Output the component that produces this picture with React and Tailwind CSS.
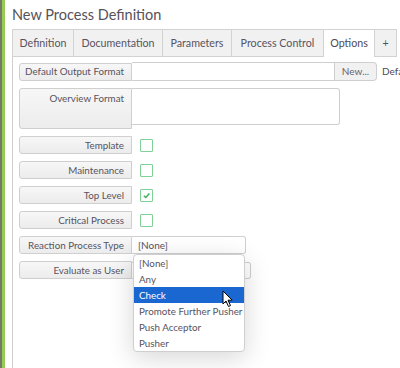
import React from 'react';

const font = { fontFamily: 'Lato, "Open Sans", sans-serif' };

function Label({ children, tall }) {
  return (
    <div
      className={`w-[113px] shrink-0 flex justify-end pr-[7px] whitespace-nowrap rounded-l-[3px] border border-[#cfcfcf] bg-gradient-to-b from-[#f7f7f7] to-[#ececec] text-[9.8px] text-[#57535f] ${tall ? 'h-[41px] items-start pt-[2px]' : 'h-[18px] items-center'}`}
    >
      {children}
    </div>
  );
}

function Check({ checked }) {
  return (
    <div className="ml-[8px] w-[13px] h-[13px] border border-[#7fd197] rounded-[1px] bg-white flex items-center justify-center">
      {checked && (
        <svg width="9" height="9" viewBox="0 0 10 10">
          <path d="M2 5.2 L4.2 7.3 L8.2 2.8" fill="none" stroke="#3fae5a" strokeWidth="1.6" />
        </svg>
      )}
    </div>
  );
}

export default function App() {
  const tabs = [
    { t: 'Definition', w: 'w-[62px]' },
    { t: 'Documentation', w: 'w-[89px]' },
    { t: 'Parameters', w: 'w-[69px]' },
    { t: 'Process Control', w: 'w-[92px]' },
    { t: 'Options', w: 'w-[51px]', active: true },
    { t: '+', w: 'w-[22px]' },
  ];
  const checks = [
    { t: 'Template' },
    { t: 'Maintenance' },
    { t: 'Top Level', c: true },
    { t: 'Critical Process' },
  ];
  const opts = ['[None]', 'Any', 'Check', 'Promote Further Pusher', 'Push Acceptor', 'Pusher'];

  return (
    <div className="relative w-[400px] h-[368px] overflow-hidden bg-white flex" style={font}>
      <div className="w-[2px] shrink-0 bg-[#767b69]" />
      <div className="w-[3px] shrink-0 bg-[#97ca55]" />
      <div className="flex-1 flex flex-col pl-[7px] min-w-0">
        <div className="h-[29px] pt-[6px] text-[14.5px] leading-[18px] text-[#555259] whitespace-nowrap">New Process Definition</div>
        <div className="flex h-[28px] shrink-0">
          {tabs.map((tab, i) => (
            <div
              key={tab.t}
              className={`${tab.w} shrink-0 flex items-center justify-center text-[10.7px] whitespace-nowrap border-t border-r border-[#d2d2d2] ${i === 0 ? 'border-l' : ''} ${tab.active ? 'bg-white text-[#4e4b55]' : 'bg-[#f1f1f1] border-b text-[#57535f]'}`}
            >
              {tab.t}
            </div>
          ))}
        </div>
        <div className="flex-1 border-l border-[#cfcfcf] pl-[6px] pt-[5px] flex flex-col gap-[7px]">
          <div className="flex items-center h-[19px] whitespace-nowrap">
            <Label>Default Output Format</Label>
            <div className="w-[203px] h-[19px] shrink-0 border border-l-0 border-[#cfcfcf] bg-white" />
            <div className="w-[42px] h-[19px] shrink-0 border border-l-0 border-[#cfcfcf] rounded-r-[4px] bg-[#f1f1f1] flex items-center justify-center text-[10px] text-[#66636b]">New...</div>
            <div className="ml-[5px] text-[10px] text-[#4e4b55]">Default</div>
          </div>
          <div className="flex items-start">
            <Label tall>Overview Format</Label>
            <div className="w-[208px] h-[37px] shrink-0 border border-l-0 border-[#cfcfcf] rounded-r-[3px] bg-white" />
          </div>
          {checks.map(c => (
            <div key={c.t} className="flex items-center">
              <Label>{c.t}</Label>
              <Check checked={c.c} />
            </div>
          ))}
          <div className="flex items-center">
            <Label>Reaction Process Type</Label>
            <div className="w-[114px] h-[18px] shrink-0 border border-l-0 border-[#cfcfcf] rounded-r-[3px] bg-white flex items-center pl-[6px] text-[10px] text-[#57535f]">[None]</div>
          </div>
          <div className="flex items-center">
            <Label>Evaluate as User</Label>
            <div className="w-[119px] h-[17px] shrink-0 border border-l-0 border-[#cfcfcf] rounded-r-[3px] bg-white" />
          </div>
        </div>
      </div>

      <div className="absolute left-[133px] top-[254px] w-[112px] bg-white border border-[#cfcfcf] rounded-[4px] shadow-[0_6px_26px_rgba(0,0,0,0.16)] overflow-hidden">
        {opts.map(o => (
          <div
            key={o}
            className={`h-[16px] flex items-center pl-[5px] text-[9.8px] whitespace-nowrap ${o === 'Check' ? 'bg-[#1b67d1] text-white' : 'text-[#57535f]'}`}
          >
            {o}
          </div>
        ))}
      </div>

      <svg className="absolute left-[222px] top-[290px]" width="12" height="18" viewBox="0 0 12 18">
        <path d="M1 1 L1 14 L4 11 L6.5 16.5 L8.5 15.6 L6 10.2 L10.2 10.2 Z" fill="#fff" stroke="#000" strokeWidth="1" strokeLinejoin="round" />
      </svg>
    </div>
  );
}
